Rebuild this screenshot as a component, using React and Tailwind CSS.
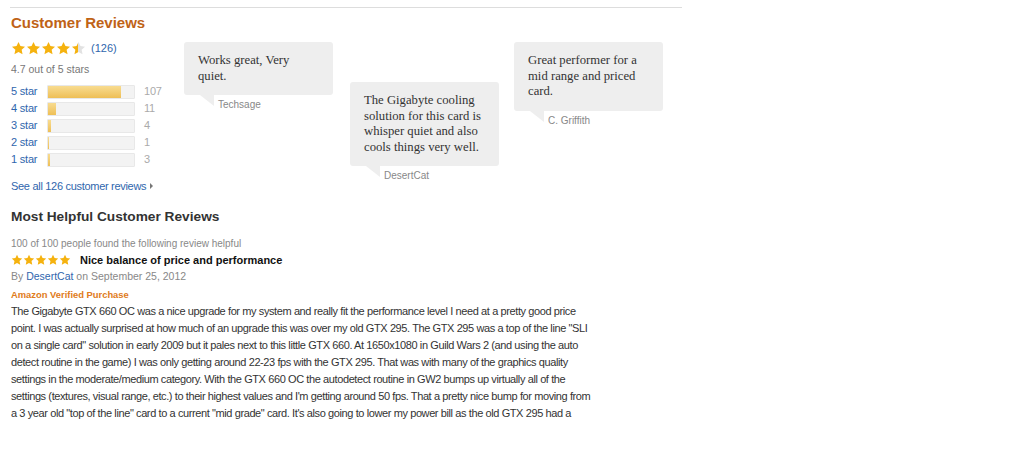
import React from 'react';

const STAR = 'M10 1.2l2.6 5.6 6.1.7-4.5 4.2 1.2 6.1L10 14.8l-5.4 3 1.2-6.1L1.3 7.5l6.1-.7z';

function Star({ size = 15, fill = 1, id }) {
  // fill: 1 = full, 0.5 = half, 0 = empty
  return (
    <svg width={size} height={size} viewBox="0 0 20 20" className="shrink-0">
      <defs>
        <linearGradient id={`g-${id}`} x1="0" x2="1" y1="0" y2="0">
          <stop offset={fill} stopColor="#f5b20f" />
          <stop offset={fill} stopColor="#e2e2e2" />
        </linearGradient>
      </defs>
      <path d={STAR} fill={`url(#g-${id})`} />
    </svg>
  );
}

function Stars({ value, size, prefix }) {
  return (
    <div className="flex">
      {[0, 1, 2, 3, 4].map((i) => (
        <Star key={i} size={size} id={`${prefix}${i}`} fill={Math.max(0, Math.min(1, value - i))} />
      ))}
    </div>
  );
}

const histogram = [
  { label: '5 star', count: 107, pct: 85 },
  { label: '4 star', count: 11, pct: 9 },
  { label: '3 star', count: 4, pct: 3 },
  { label: '2 star', count: 1, pct: 1 },
  { label: '1 star', count: 3, pct: 2 },
];

function Bubble({ lines, author, className }) {
  return (
    <div className={`w-[149px] shrink-0 ${className}`}>
      <div className="bg-[#eeeeee] rounded-[3px] pl-[14px] pr-[8px] pt-[11px] pb-[11px] font-['Liberation_Serif',Georgia,serif] text-[12.7px] leading-[15.5px] text-[#333]">
        {lines.map((l, i) => (
          <div key={i}>{l}</div>
        ))}
      </div>
      <div className="flex items-start">
        <div className="ml-[16px] w-0 h-0 border-t-[11px] border-t-[#eeeeee] border-l-[14px] border-l-transparent" />
        <span className="ml-[4px] mt-[3px] text-[10px] leading-[13px] text-[#888]">{author}</span>
      </div>
    </div>
  );
}

const body = [
  'The Gigabyte GTX 660 OC was a nice upgrade for my system and really fit the performance level I need at a pretty good price',
  'point. I was actually surprised at how much of an upgrade this was over my old GTX 295. The GTX 295 was a top of the line "SLI',
  'on a single card" solution in early 2009 but it pales next to this little GTX 660. At 1650x1080 in Guild Wars 2 (and using the auto',
  'detect routine in the game) I was only getting around 22-23 fps with the GTX 295. That was with many of the graphics quality',
  'settings in the moderate/medium category. With the GTX 660 OC the autodetect routine in GW2 bumps up virtually all of the',
  "settings (textures, visual range, etc.) to their highest values and I'm getting around 50 fps. That a pretty nice bump for moving from",
  'a 3 year old "top of the line" card to a current "mid grade" card. It\'s also going to lower my power bill as the old GTX 295 had a',
];

export default function App() {
  return (
    <div className="w-[1024px] h-[476px] overflow-hidden bg-white font-['Liberation_Sans',Arial,sans-serif]">
      <div className="ml-[10px] w-[672px] pt-[7px]">
        <div className="border-t border-[#dddddd]" />

        {/* Customer Reviews */}
        <h2 className="mt-[5px] pl-[1px] text-[15px] leading-[20px] font-bold text-[#bf6317]">Customer Reviews</h2>

        <div className="flex">
          <div className="w-[174px] shrink-0 pl-[1px] pt-[7px]">
            <div className="flex items-center h-[17px]">
              <Stars value={4.5} size={15} prefix="top" />
              <a className="ml-[5px] text-[11px] text-[#2f66ad]">(126)</a>
            </div>
            <div className="mt-[4px] text-[10.5px] leading-[16px] text-[#777]">4.7 out of 5 stars</div>

            <div className="mt-[6px]">
              {histogram.map((h) => (
                <div key={h.label} className="flex items-center h-[17px] text-[11px] tracking-[-0.2px]">
                  <a className="w-[36px] text-[#2f66ad]">{h.label}</a>
                  <div className="w-[88px] h-[14px] bg-[#f3f3f3] border border-[#e8e8e8] rounded-[1px] overflow-hidden">
                    <div
                      className="h-full bg-gradient-to-b from-[#f8dc90] to-[#eebf55]"
                      style={{ width: `${h.pct}%` }}
                    />
                  </div>
                  <span className="ml-[9px] text-[#aaa]">{h.count}</span>
                </div>
              ))}
            </div>

            <a className="mt-[10px] flex items-center text-[11px] tracking-[-0.3px] leading-[16px] text-[#2f66ad]">
              See all 126 customer reviews
              <span className="ml-[4px] w-0 h-0 border-y-[3px] border-y-transparent border-l-[3px] border-l-[#777]" />
            </a>
          </div>

          <Bubble className="mt-[9px]" lines={['Works great, Very', 'quiet.']} author="Techsage" />
          <Bubble
            className="ml-[17px] mt-[49px]"
            lines={['The Gigabyte cooling', 'solution for this card is', 'whisper quiet and also', 'cools things very well.']}
            author="DesertCat"
          />
          <Bubble className="ml-[15px] mt-[9px]" lines={['Great performer for a', 'mid range and priced', 'card.']} author="C. Griffith" />
        </div>

        {/* Most Helpful */}
        <h3 className="mt-[14px] pl-[1px] text-[13.7px] leading-[18px] font-bold text-[#333]">Most Helpful Customer Reviews</h3>

        <div className="pl-[1px]">
          <div className="mt-[11px] text-[10px] leading-[14px] text-[#888]">100 of 100 people found the following review helpful</div>
          <div className="mt-[1px] flex items-center h-[16px]">
            <Stars value={5} size={12} prefix="rv" />
            <span className="ml-[9px] text-[11px] font-bold text-[#111]">Nice balance of price and performance</span>
          </div>
          <div className="text-[10.5px] leading-[16px] text-[#888]">
            By <a className="text-[#2f66ad]">DesertCat</a> on September 25, 2012
          </div>
          <div className="mt-[4px] text-[9.4px] leading-[14px] font-bold text-[#e07b20]">Amazon Verified Purchase</div>
          <div className="mt-[1px] text-[11px] tracking-[-0.4px] leading-[17px] text-[#333] whitespace-nowrap">
            {body.map((l, i) => (
              <div key={i}>{l}</div>
            ))}
          </div>
        </div>
      </div>
    </div>
  );
}
